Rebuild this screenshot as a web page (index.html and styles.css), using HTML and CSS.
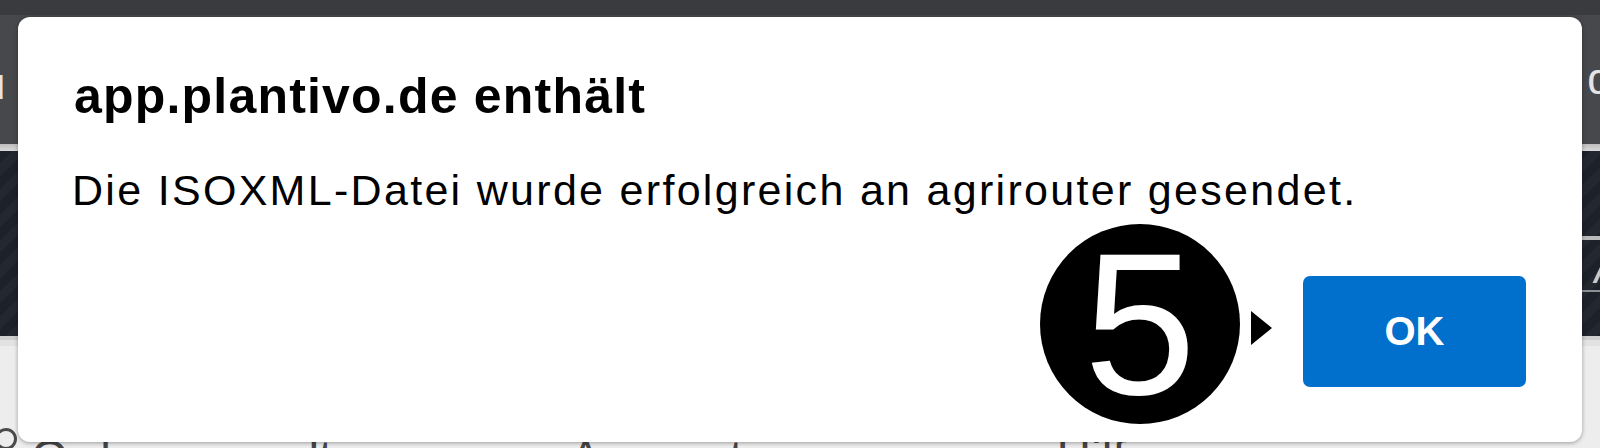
FILE: index.html
```html
<!DOCTYPE html>
<html lang="de">
<head>
<meta charset="utf-8">
<title>app.plantivo.de</title>
<link rel="stylesheet" href="styles.css">
</head>
<body>
<div class="app">
  <div class="topbar"></div>
  <div class="header">
    <span class="h-left">u</span>
    <span class="h-right">dlung</span>
  </div>
  <div class="sep"></div>
  <div class="band">
    <div class="band-row band-row-1"></div>
    <div class="band-line band-line-1"></div>
    <div class="band-row band-row-2"><span class="slash">/</span></div>
    <div class="band-line band-line-2"></div>
    <div class="band-row band-row-3"></div>
  </div>
  <div class="sep2"></div>
  <div class="content">
    <div class="nav">
      <span class="nav-icon"></span>
      <span class="nav-item nav-1">Ordnerverwaltung</span>
      <span class="nav-item nav-2">Auswertungen</span>
      <span class="nav-item nav-3">Hilfe</span>
    </div>
  </div>
</div>

<div class="dialog">
  <div class="title">app.plantivo.de enthält</div>
  <div class="message">Die ISOXML-Datei wurde erfolgreich an agrirouter gesendet.</div>
  <div class="actions">
    <button class="ok">OK</button>
  </div>
  <div class="badge">5</div>
  <div class="pointer"></div>
</div>
</body>
</html>
```
FILE: styles.css
```css
html, body {
  margin: 0;
  padding: 0;
}
body {
  width: 1600px;
  height: 448px;
  overflow: hidden;
  position: relative;
  font-family: "Liberation Sans", Arial, sans-serif;
  background: #ececec;
}
.app {
  display: flex;
  flex-direction: column;
  height: 448px;
}
.topbar {
  height: 15px;
  background: #3a3b3f;
}
.header {
  height: 129px;
  background: #47484c;
  display: flex;
  align-items: center;
  justify-content: space-between;
  color: #e4e4e6;
  font-size: 44px;
  overflow: hidden;
}
.h-left {
  margin-left: -19px;
  margin-top: 8px;
}
.h-right {
  margin-right: -95px;
  margin-top: -2px;
}
.sep {
  height: 7px;
  background: linear-gradient(#bdbdbd, #d9d9d9);
}
.band {
  height: 185px;
  display: flex;
  flex-direction: column;
  background: repeating-linear-gradient(135deg, #1d2129 0 9px, #232730 9px 18px);
}
.band-row-1 { height: 85px; }
.band-row-2 {
  height: 50px;
  display: flex;
  justify-content: flex-end;
  align-items: center;
  overflow: hidden;
}
.band-row-3 { flex: 1; }
.band-line {
  margin-left: auto;
  width: 40px;
  background: #b8b9bb;
}
.band-line-1 { height: 4px; }
.band-line-2 { height: 2px; background: #8e8f92; }
.slash {
  color: #c8c8ca;
  font-size: 52px;
  font-style: italic;
  margin-right: -10px;
}
.sep2 {
  height: 10px;
  background: linear-gradient(#cfcfcf 0 4px, #e2e2e2 4px);
}
.content {
  flex: 1;
  display: flex;
  flex-direction: column;
  justify-content: flex-end;
  background: #ededed;
}
.nav {
  height: 20px;
  box-sizing: border-box;
  padding-top: 6px;
  display: flex;
  align-items: flex-start;
  overflow: hidden;
  color: #454547;
  font-size: 48px;
  line-height: 1;
}
.nav-icon {
  width: 16px;
  height: 16px;
  border: 3px solid #4a4a4c;
  border-radius: 50%;
  margin-left: -5px;
  margin-top: -6px;
  flex: none;
}
.nav-1 { margin-left: 14px; }
.nav-2 { margin-left: 157px; }
.nav-3 { margin-left: 180px; }

.dialog {
  position: absolute;
  left: 18px;
  top: 17px;
  width: 1564px;
  height: 425px;
  box-sizing: border-box;
  padding: 54px 56px 55px 56px;
  background: #ffffff;
  border-radius: 12px;
  box-shadow: 0 1px 4px rgba(0, 0, 0, 0.35);
  display: flex;
  flex-direction: column;
  color: #000;
}
.title {
  font-size: 50px;
  line-height: 50px;
  height: 50px;
  font-weight: 700;
  letter-spacing: 1.2px;
}
.message {
  margin-top: 48px;
  margin-left: -2px;
  font-size: 43px;
  line-height: 42px;
  height: 42px;
  letter-spacing: 2.3px;
  white-space: nowrap;
}
.actions {
  margin-top: 65px;
  display: flex;
  justify-content: flex-end;
}
.ok {
  width: 223px;
  height: 111px;
  border: 0;
  border-radius: 7px;
  background: #016fcc;
  color: #ffffff;
  font-family: "Liberation Sans", Arial, sans-serif;
  font-size: 40px;
  font-weight: 700;
  padding: 0;
}
.badge {
  position: absolute;
  left: 1022px;
  top: 207px;
  width: 200px;
  height: 200px;
  border-radius: 50%;
  background: #000;
  color: #fff;
  font-size: 202px;
  line-height: 200px;
  text-align: center;
}
.pointer {
  position: absolute;
  left: 1233px;
  top: 294px;
  width: 0;
  height: 0;
  border-left: 21px solid #000;
  border-top: 17.5px solid transparent;
  border-bottom: 17.5px solid transparent;
}
```
